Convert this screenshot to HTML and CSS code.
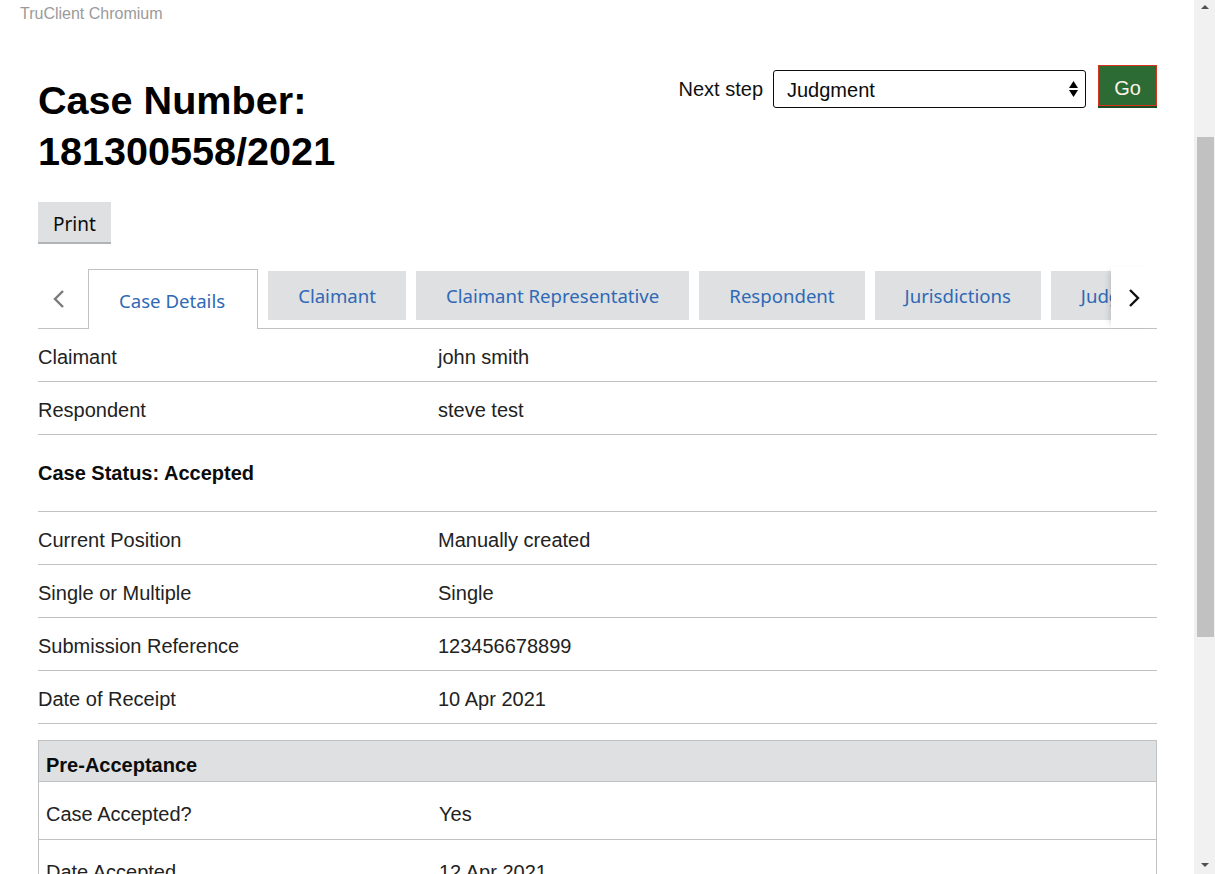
FILE: index.html
```html
<!DOCTYPE html>
<html lang="en">
<head>
<meta charset="utf-8">
<title>Case 181300558/2021</title>
<link rel="stylesheet" href="styles.css">
</head>
<body>
<div class="window-title">TruClient Chromium</div>

<div class="page">
  <main class="main">
    <div class="case-header">
      <h1 class="case-title">Case Number: 181300558/2021</h1>
      <form class="next-step">
        <label class="next-step-label" for="next-step">Next step</label>
        <div class="select-wrap">
          <select id="next-step" class="select">
            <option>Judgment</option>
          </select>
          <svg class="select-arrows" width="9" height="16" viewBox="0 0 9 16" aria-hidden="true">
            <polygon points="4.5,0 9,7 0,7" fill="#000"/>
            <polygon points="0,9 9,9 4.5,16" fill="#000"/>
          </svg>
        </div>
        <button type="button" class="btn-go">Go</button>
      </form>
    </div>

    <button type="button" class="btn-print">Print</button>

    <div class="tabs">
      <div class="tab-prev">
        <svg width="14" height="20" viewBox="0 0 14 20" aria-hidden="true">
          <polyline points="11,2 3,10 11,18" fill="none" stroke="#7a7a7a" stroke-width="2.4"/>
        </svg>
      </div>
      <div class="tab-list">
        <div class="tab tab-active">Case Details</div>
        <div class="tab">Claimant</div>
        <div class="tab">Claimant Representative</div>
        <div class="tab">Respondent</div>
        <div class="tab">Jurisdictions</div>
        <div class="tab">Judgments</div>
        <div class="tab">Hearings</div>
      </div>
      <div class="tab-next">
        <svg width="14" height="20" viewBox="0 0 14 20" aria-hidden="true">
          <polyline points="3,2 11,10 3,18" fill="none" stroke="#111" stroke-width="2.4"/>
        </svg>
      </div>
    </div>

    <div class="details">
      <div class="row"><div class="cell-key">Claimant</div><div class="cell-val">john smith</div></div>
      <div class="row"><div class="cell-key">Respondent</div><div class="cell-val">steve test</div></div>
      <div class="row row-status"><div class="status">Case Status: Accepted</div></div>
      <div class="row"><div class="cell-key">Current Position</div><div class="cell-val">Manually created</div></div>
      <div class="row"><div class="cell-key">Single or Multiple</div><div class="cell-val">Single</div></div>
      <div class="row"><div class="cell-key">Submission Reference</div><div class="cell-val">123456678899</div></div>
      <div class="row"><div class="cell-key">Date of Receipt</div><div class="cell-val">10 Apr 2021</div></div>
    </div>

    <div class="section-box">
      <div class="section-head">Pre-Acceptance</div>
      <div class="section-row"><div class="cell-key">Case Accepted?</div><div class="cell-val">Yes</div></div>
      <div class="section-row"><div class="cell-key">Date Accepted</div><div class="cell-val">12 Apr 2021</div></div>
    </div>
  </main>
</div>

<div class="scrollbar" aria-hidden="true">
  <div class="sb-up"></div>
  <div class="sb-thumb"></div>
  <div class="sb-down"></div>
</div>
</body>
</html>
```

FILE: styles.css
```css
html, body {
  margin: 0;
  padding: 0;
  height: 100%;
  overflow: hidden;
  background: #fff;
}

body {
  font-family: "Liberation Sans", Arial, sans-serif;
  color: #222;
}

.window-title {
  height: 28px;
  line-height: 28px;
  padding-left: 20px;
  font-size: 16px;
  color: #9a9a9a;
}

.page {
  width: 1194px;
}

.main {
  padding: 0 37px 0 38px;
}

/* Header */
.case-header {
  display: flex;
  justify-content: space-between;
  align-items: flex-start;
  padding-top: 37px;
}

.case-title {
  margin: 10px 0 0;
  width: 440px;
  font-size: 39.6px;
  line-height: 51px;
  font-weight: bold;
  color: #000;
}

.next-step {
  display: flex;
  align-items: flex-start;
  margin: 0;
}

.next-step-label {
  font-size: 20px;
  line-height: 24px;
  margin-top: 12px;
  margin-right: 10px;
  color: #111;
}

.select-wrap {
  position: relative;
  margin-top: 5px;
}

.select {
  appearance: none;
  -webkit-appearance: none;
  box-sizing: border-box;
  width: 313px;
  height: 38px;
  border: 1px solid #0b0c0c;
  border-radius: 3px;
  background: #fff;
  padding: 1px 30px 0 13px;
  font-family: "Liberation Sans", Arial, sans-serif;
  font-size: 20px;
  color: #0b0c0c;
}

.select-arrows {
  position: absolute;
  right: 8px;
  top: 11px;
  pointer-events: none;
}

.btn-go {
  box-sizing: border-box;
  margin-left: 12px;
  width: 59px;
  height: 41px;
  border: 1px solid #d4351c;
  background: #2c6b33;
  box-shadow: 0 2px 0 #1c4a22;
  color: #fbf3ea;
  font-family: "Liberation Sans", Arial, sans-serif;
  font-size: 20px;
  padding: 6px 0 0;
}

/* Print */
.btn-print {
  display: block;
  margin-top: 25px;
  box-sizing: border-box;
  height: 40px;
  padding: 4px 15px 0;
  border: 0;
  background: #dee0e2;
  box-shadow: 0 2px 0 #b1b4b6;
  font-family: "Noto Sans", sans-serif;
  font-size: 19px;
  color: #0b0c0c;
}

/* Tabs */
.tabs {
  position: relative;
  display: flex;
  margin-top: 27px;
  height: 60px;
  background: linear-gradient(#bfc1c3, #bfc1c3) left bottom / 100% 1px no-repeat;
}

.tab-prev {
  flex: 0 0 50px;
  display: flex;
  align-items: center;
  padding-left: 14px;
  box-sizing: border-box;
}

.tab-list {
  flex: 1;
  display: flex;
  align-items: flex-start;
  gap: 10px;
  overflow: hidden;
  height: 60px;
}

.tab {
  flex: 0 0 auto;
  box-sizing: border-box;
  height: 49px;
  margin-top: 2px;
  padding: 0 30px;
  display: flex;
  align-items: center;
  background: #dee0e2;
  color: #2f69b5;
  font-family: "Noto Sans", sans-serif;
  font-size: 18.6px;
  white-space: nowrap;
}

.tab-active {
  height: 60px;
  margin-top: 0;
  padding: 2px 32px 0 30px;
  background: #fff;
  border: 1px solid #bfc1c3;
  border-bottom: 0;
}

.tab-next {
  position: absolute;
  right: 0;
  top: -2px;
  bottom: 1px;
  width: 46px;
  display: flex;
  align-items: center;
  justify-content: center;
  background: #fff;
  box-shadow: -5px 0 6px -4px rgba(0, 0, 0, 0.18);
}

/* Detail rows */
.row {
  display: grid;
  grid-template-columns: 400px 1fr;
  border-bottom: 1px solid #bfc1c3;
  font-size: 20px;
  line-height: 24px;
  padding: 16px 0 12px;
}

.row-status {
  display: block;
  padding: 26px 0;
}

.status {
  font-weight: bold;
  color: #0b0c0c;
}

/* Pre-acceptance */
.section-box {
  margin-top: 16px;
  border: 1px solid #bfc1c3;
  font-size: 20px;
  line-height: 24px;
}

.section-head {
  background: #dee0e2;
  border-bottom: 1px solid #bfc1c3;
  padding: 12px 7px 4px;
  font-weight: bold;
  color: #0b0c0c;
}

.section-row {
  display: grid;
  grid-template-columns: 400px 1fr;
  border-bottom: 1px solid #bfc1c3;
  padding: 20px 0 13px;
}

.section-row .cell-key {
  padding-left: 7px;
}

/* Fake scrollbar */
.scrollbar {
  position: fixed;
  top: 0;
  right: 0;
  width: 21px;
  height: 100%;
  background: #f1f1f1;
}

.sb-thumb {
  position: absolute;
  left: 3px;
  top: 137px;
  width: 17px;
  height: 500px;
  background: #c1c1c1;
}

.sb-up, .sb-down {
  position: absolute;
  left: 7px;
  width: 0;
  height: 0;
  border-left: 4px solid transparent;
  border-right: 4px solid transparent;
}

.sb-up {
  top: 5px;
  border-bottom: 4px solid #505050;
}

.sb-down {
  bottom: 7px;
  border-top: 4px solid #505050;
}
```
